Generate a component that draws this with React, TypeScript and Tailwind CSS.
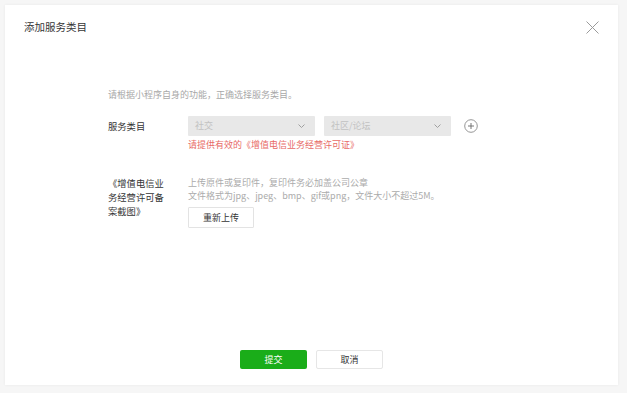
import React from "react";

function Chevron() {
  return (
    <svg width="7" height="4" viewBox="0 0 7 4" fill="none">
      <path d="M0.5 0.5l3 3 3-3" stroke="#a0a0a0" strokeWidth="1" />
    </svg>
  );
}

function Select({ text }: { text: string }) {
  return (
    <div className="w-[127px] h-[20px] bg-[#e8e8e8] rounded-[1px] flex items-center justify-between pl-[7px] pr-[10px]">
      <span className="text-[9px] leading-[12px] text-[#c2c2c2]">{text}</span>
      <Chevron />
    </div>
  );
}

export default function App() {
  return (
    <div
      className="w-[627px] h-[393px] bg-[#f6f6f6] pt-[5px] pl-[5px]"
      style={{ fontFamily: '"Noto Sans CJK SC", "Noto Sans", sans-serif' }}
    >
      <div className="relative w-[613px] h-[380px] bg-white shadow-[0_0_3px_rgba(0,0,0,0.06)] flex flex-col">
        <div className="pl-[19px] pt-[15px] text-[10.5px] leading-[14px] text-[#353535]">添加服务类目</div>
        <button className="absolute top-[16px] right-[19px] w-[13px] h-[13px]">
          <svg width="13" height="13" viewBox="0 0 13 13" fill="none">
            <path d="M0.5 0.5l12 12M12.5 0.5l-12 12" stroke="#9a9a9a" strokeWidth="1" />
          </svg>
        </button>

        <div className="pl-[103px] mt-[54px]">
          <div className="text-[9px] leading-[14px] text-[#a8a8a8]">请根据小程序自身的功能，正确选择服务类目。</div>

          <div className="flex items-center mt-[14px]">
            <div className="w-[80px] text-[9.3px] leading-[12px] text-[#353535]">服务类目</div>
            <div className="flex items-center gap-[9px]">
              <Select text="社交" />
              <Select text="社区/论坛" />
            </div>
            <div className="ml-[13px]">
              <svg width="14" height="14" viewBox="0 0 14 14" fill="none">
                <circle cx="7" cy="7" r="6.3" stroke="#8a8a8a" strokeWidth="0.9" />
                <path d="M7 4v6M4 7h6" stroke="#666" strokeWidth="0.9" />
              </svg>
            </div>
          </div>
          <div className="ml-[80px] mt-[3px] text-[9px] leading-[12px] text-[#e86a66]">请提供有效的《增值电信业务经营许可证》</div>

          <div className="flex mt-[25px]">
            <div className="w-[80px]">
              <div className="w-[58px] text-[9.3px] leading-[14px] text-[#353535]">《增值电信业务经营许可备案截图》</div>
            </div>
            <div className="flex flex-col items-start">
              <div className="text-[9px] leading-[13px] text-[#ababab]">上传原件或复印件，复印件务必加盖公司公章</div>
              <div className="text-[9px] leading-[13px] text-[#ababab]">文件格式为jpg、jpeg、bmp、gif或png，文件大小不超过5M。</div>
              <button className="mt-[5px] w-[66px] h-[21px] border border-[#e3e3e3] bg-white text-[9px] leading-[12px] text-[#353535] rounded-[1px]">重新上传</button>
            </div>
          </div>
        </div>

        <div className="mt-auto pb-[16px] flex justify-center gap-[9px]">
          <button className="w-[67px] h-[19px] bg-[#1aad19] rounded-[2px] text-[9px] leading-[12px] text-white">提交</button>
          <button className="w-[67px] h-[19px] border border-[#e6e6e6] bg-white rounded-[2px] text-[9px] leading-[12px] text-[#353535]">取消</button>
        </div>
      </div>
    </div>
  );
}
